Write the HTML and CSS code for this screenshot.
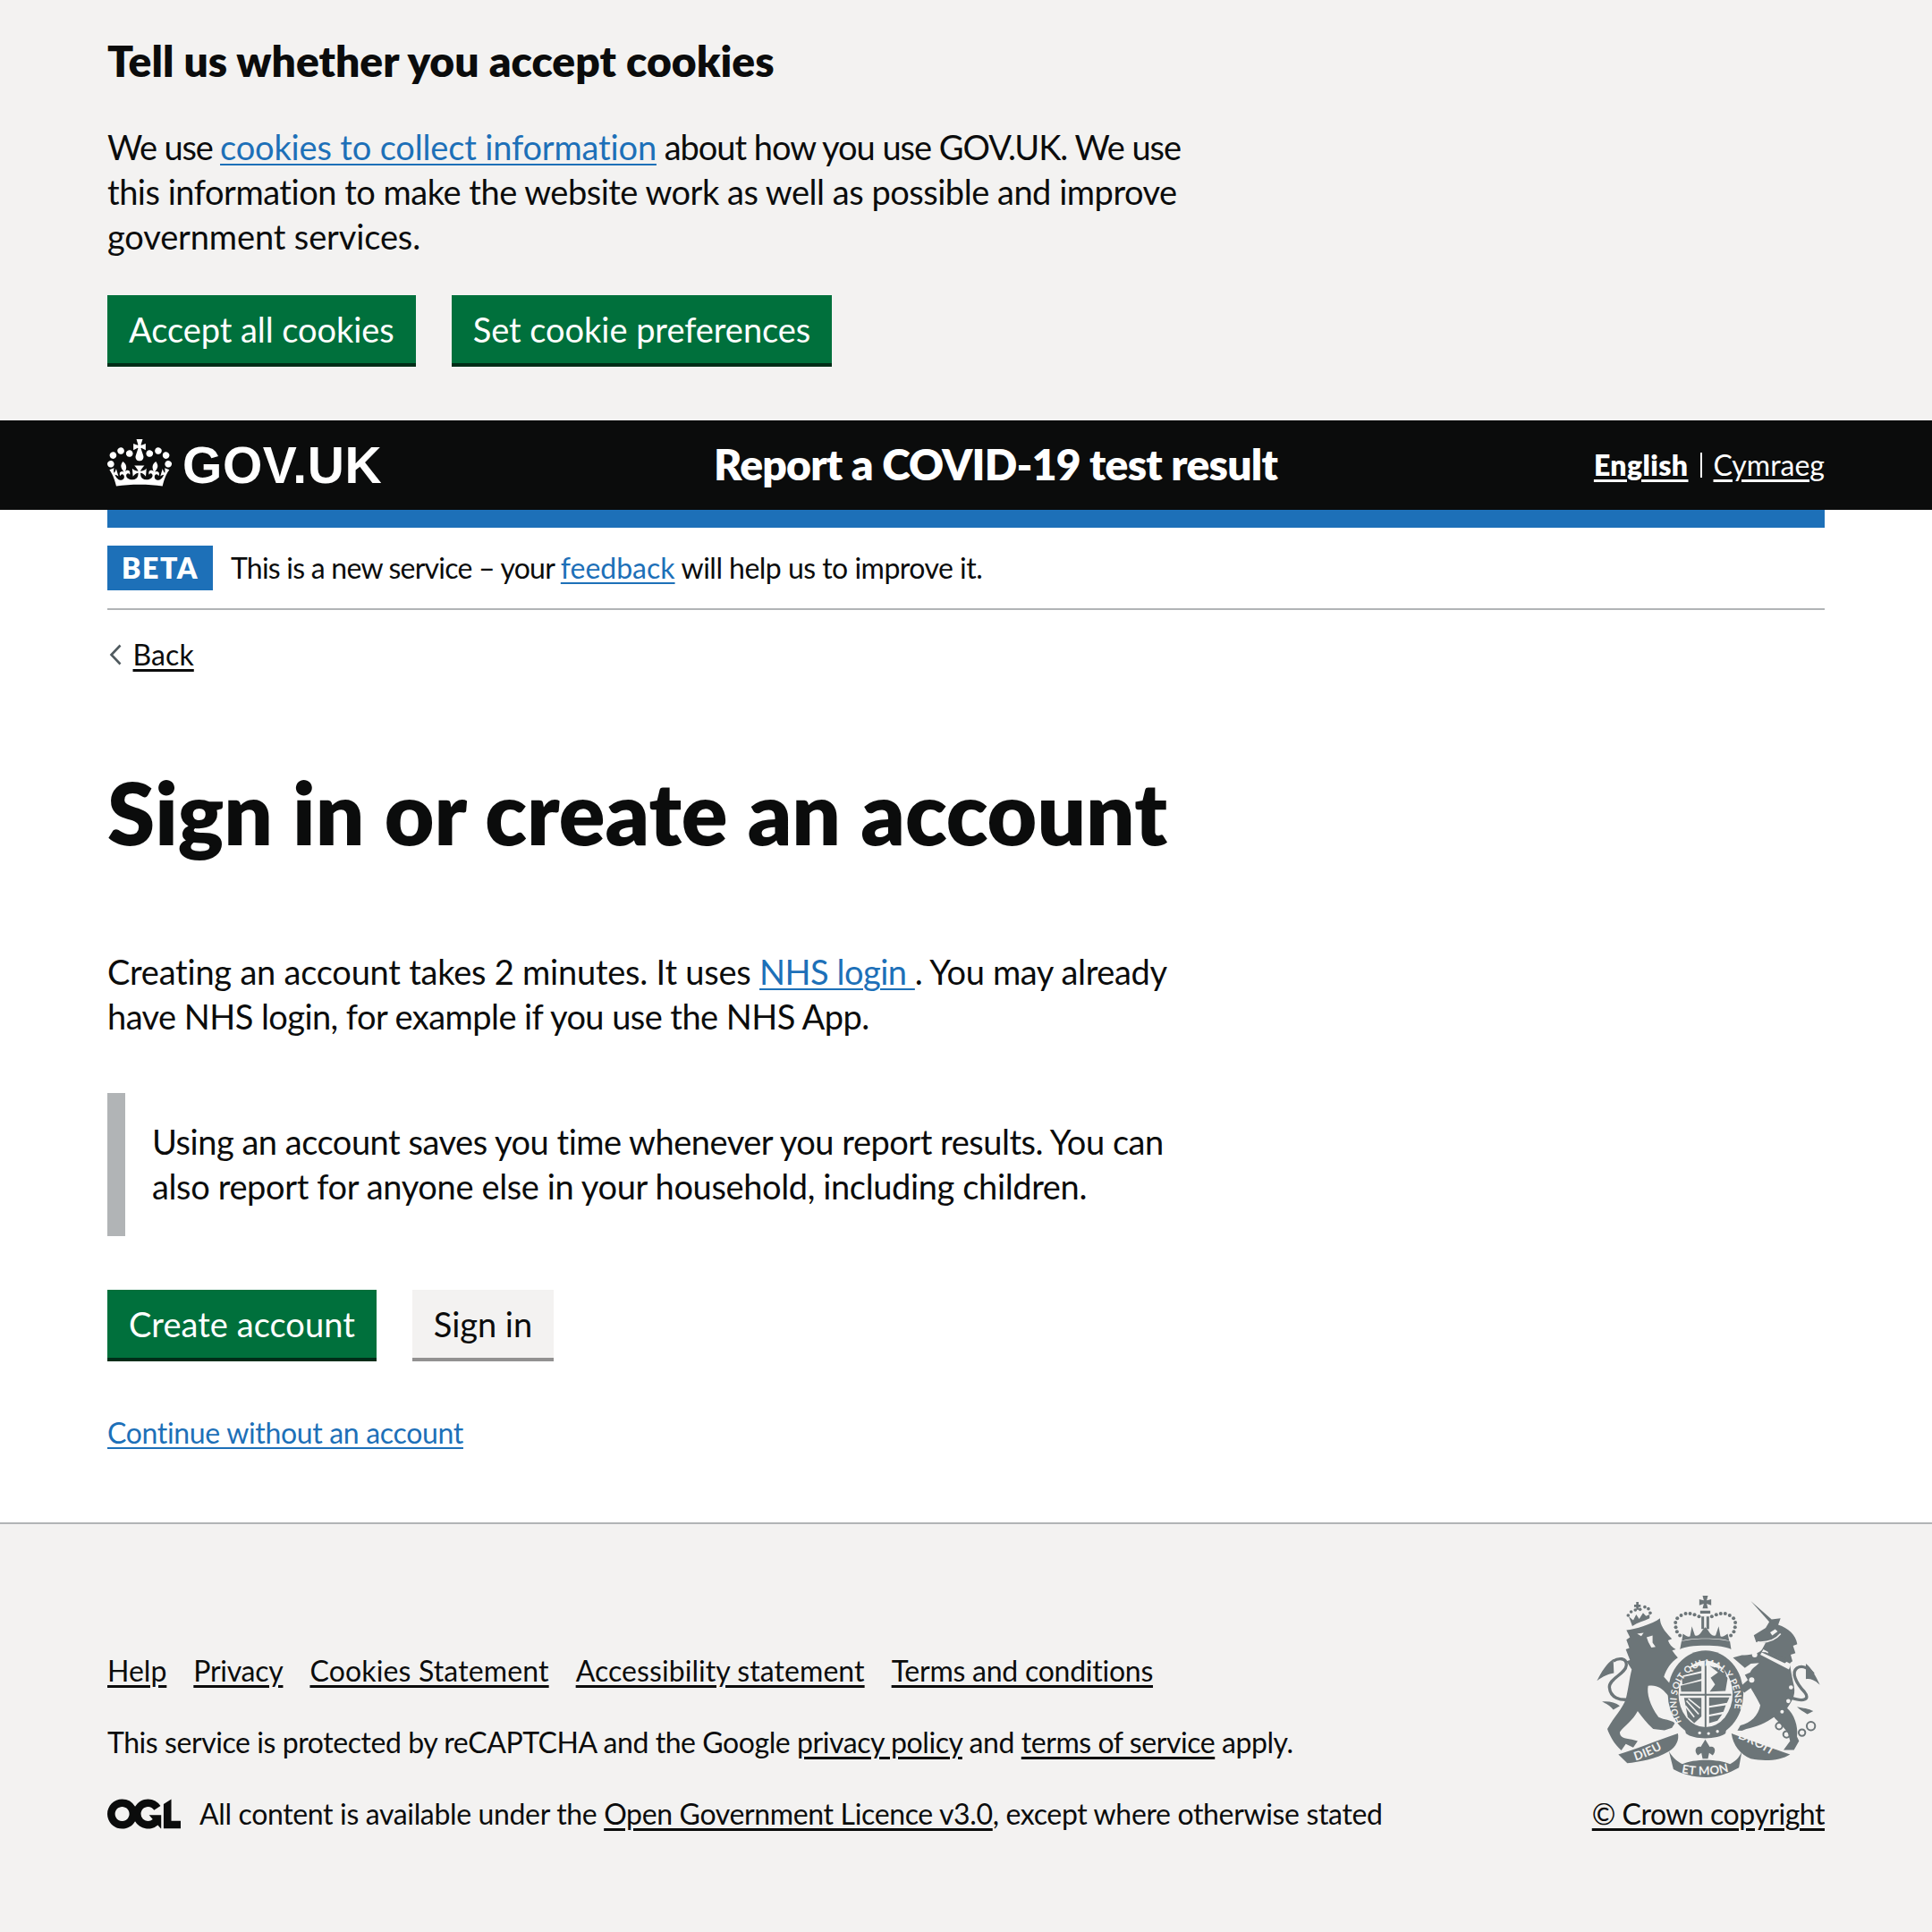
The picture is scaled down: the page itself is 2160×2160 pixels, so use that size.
FILE: index.html
```html
<!DOCTYPE html>
<html lang="en">
<head>
<meta charset="utf-8">
<title>Sign in or create an account</title>
<link rel="stylesheet" href="styles.css">
</head>
<body>
<section class="cookie">
  <h2 class="cookie-title">Tell us whether you accept cookies</h2>
  <p class="body-l cookie-text"><span class="fit-a">We use </span><a class="link fit-b" href="#">cookies to collect information</a><span class="fit-c"> about how you use GOV.UK. We use</span> this information to make the website work as well as possible and improve <span class="fit-h">government services.</span></p>
  <div class="btn-row">
    <a class="btn" href="#">Accept all cookies</a>
    <a class="btn" href="#">Set cookie preferences</a>
  </div>
</section>

<header class="header">
  <a class="logo" href="#">
    <svg class="crown" viewBox="0 0 132 97"><path fill="currentColor" fill-rule="evenodd" d="M25 30.2c3.5 1.5 7.7-.2 9.1-3.7 1.5-3.6-.2-7.8-3.9-9.2-3.6-1.4-7.6.3-9.1 3.9-1.4 3.5.3 7.5 3.9 9zM9 39.5c3.6 1.5 7.8-.2 9.2-3.7 1.5-3.6-.2-7.8-3.9-9.1-3.6-1.5-7.6.2-9.1 3.8-1.4 3.5.3 7.5 3.8 9zM4.4 57.2c3.5 1.5 7.7-.2 9.1-3.8 1.5-3.6-.2-7.7-3.9-9.1-3.5-1.5-7.6.3-9.1 3.8-1.4 3.5.3 7.6 3.9 9.1zm38.3-21.4c3.5 1.5 7.7-.2 9.1-3.8 1.5-3.6-.2-7.7-3.9-9.1-3.6-1.5-7.6.3-9.1 3.8-1.3 3.6.4 7.7 3.9 9.1zm64.4-5.6c-3.6 1.5-7.8-.2-9.1-3.7-1.5-3.6.2-7.8 3.8-9.2 3.6-1.4 7.7.3 9.2 3.9 1.3 3.5-.4 7.5-3.9 9zm15.9 9.3c-3.6 1.5-7.7-.2-9.1-3.7-1.5-3.6.2-7.8 3.7-9.1 3.6-1.5 7.7.2 9.2 3.8 1.5 3.5-.3 7.5-3.8 9zm4.7 17.7c-3.6 1.5-7.8-.2-9.2-3.8-1.5-3.6.2-7.7 3.9-9.1 3.6-1.5 7.7.3 9.2 3.8 1.3 3.5-.4 7.6-3.9 9.1zM89.3 35.8c-3.6 1.5-7.8-.2-9.2-3.8-1.4-3.6.2-7.7 3.9-9.1 3.6-1.5 7.7.3 9.2 3.8 1.4 3.6-.3 7.7-3.9 9.1zM69.7 17.7l8.9 4.7V9.3l-8.9 2.8c-.2-.3-.5-.6-.9-.9L72.4 0H59.6l3.5 11.2c-.3.3-.6.5-.9.9l-8.8-2.8v13.1l8.8-4.7c.3.3.6.7.9.9l-5 15.4v.1c-.2.8-.4 1.6-.4 2.4 0 4.1 3.1 7.5 7 8.1h.2c.3 0 .7.1 1 .1.4 0 .7 0 1-.1h.2c4-.6 7.1-4.1 7.1-8.1 0-.8-.1-1.7-.4-2.4V34l-5.1-15.4c.4-.2.7-.6 1-.9zM66 92.8c16.9 0 32.8 1.1 47.1 3.2 4-16.9 8.9-26.7 14-33.5l-9.6-3.4c1 4.9 1.1 7.2 0 10.2-1.5-1.4-3-4.3-4.2-8.7L108.6 76c2.8-2 5-3.2 7.5-3.3-4.4 9.4-10 11.9-13.6 11.2-4.3-.8-6.3-4.6-5.6-7.9 1-4.7 5.7-5.9 8-.5 4.3-8.7-3-11.4-7.6-8.8 7.1-7.2 7.9-13.5 2.1-21.1-8 6.1-8.1 12.3-4.5 20.8-4.7-5.4-12.1-2.5-9.5 6.2 3.4-5.2 7.9-2 7.2 3.1-.6 4.3-6.4 7.8-13.5 7.2-10.3-.9-10.9-8-11.2-13.8 2.5-.5 7.1 1.8 11 7.3L80.2 60c-4.1 4.4-8 5.3-12.3 5.4 1.4-4.4 8-11.6 8-11.6H55.5s6.4 7.2 7.9 11.6c-4.2-.1-8-1-12.3-5.4l1.4 16.4c3.9-5.5 8.5-7.7 10.9-7.3-.3 5.8-.9 12.8-11.1 13.8-7.2.6-12.9-2.9-13.5-7.2-.7-5 3.8-8.3 7.1-3.1 2.7-8.7-4.6-11.6-9.4-6.2 3.7-8.5 3.6-14.7-4.6-20.8-5.8 7.6-5 13.9 2.2 21.1-4.7-2.6-11.9.1-7.7 8.8 2.3-5.5 7.1-4.2 8.1.5.7 3.3-1.3 7.1-5.7 7.9-3.5.7-9-1.8-13.5-11.2 2.5.1 4.7 1.3 7.5 3.3l-4.7-15.4c-1.2 4.4-2.7 7.2-4.3 8.7-1.1-3-.9-5.3 0-10.2l-9.5 3.4c5 6.9 9.9 16.7 14 33.5 14.8-2.1 30.8-3.2 47.7-3.2z"/></svg>
    <span class="logotype">GOV.UK</span>
  </a>
  <a class="service" href="#">Report a COVID-19 test result</a>
  <nav class="lang">
    <a class="lang-link current" href="#">English</a>
    <span class="lang-sep"></span>
    <a class="lang-link" href="#">Cymraeg</a>
  </nav>
</header>

<div class="wrap">
  <div class="blue-bar"></div>
  <div class="phase">
    <strong class="tag">BETA</strong>
    <span class="phase-text"><span class="fit-i">This is a new service – your </span><a class="link fit-phase" href="#">feedback</a> will help us to improve it.</span>
  </div>
  <a class="back" href="#">
    <svg class="chevron" viewBox="0 0 14 24"><path d="M12.5 1.5 2.5 12l10 10.5" fill="none" stroke="currentColor" stroke-width="2.6"/></svg>
    <span>Back</span>
  </a>
  <main>
    <h1 class="title">Sign in or create an account</h1>
    <p class="body-l"><span class="fit-d">Creating an account takes 2 minutes. It uses </span><a class="link" href="#">NHS login </a><span class="fit-j">. You may already</span> <span class="fit-g">have NHS login, for example if you use the NHS App.</span></p>
    <div class="inset">Using an account saves you time whenever you report results. You can <span class="fit-f">also report for anyone else in your household, including children.</span></div>
    <div class="btn-row">
      <a class="btn fit-btn" href="#">Create account</a>
      <a class="btn btn-grey" href="#">Sign in</a>
    </div>
    <p class="continue"><a class="link" href="#">Continue without an account</a></p>
  </main>
</div>

<footer class="footer">
  <div class="footer-inner">
    <div class="meta">
      <ul class="footer-links">
        <li><a class="flink" href="#">Help</a></li>
        <li><a class="flink fit-e" href="#">Privacy</a></li>
        <li><a class="flink fit-k" href="#">Cookies Statement</a></li>
        <li><a class="flink fit-m" href="#">Accessibility statement</a></li>
        <li><a class="flink fit-l" href="#">Terms and conditions</a></li>
      </ul>
      <p class="captcha">This service is protected by reCAPTCHA and the Google <a class="flink" href="#">privacy policy</a> and <a class="flink" href="#">terms of service</a> apply.</p>
      <div class="licence">
        <svg class="ogl" viewBox="0 0 483.2 195.7"><path fill="currentColor" d="M421.5 142.8V.1l-50.7 32.3v161.1h112.4v-50.7zm-122.3-9.6A47.12 47.12 0 0 1 221 97.8c0-26 21.1-47.1 47.1-47.1 16.7 0 31.4 8.7 39.7 21.8l42.7-27.2A97.63 97.63 0 0 0 268.1 0c-36.5 0-68.3 20.1-85.1 49.7A98 98 0 0 0 97.8 0C43.9 0 0 43.9 0 97.8s43.9 97.8 97.8 97.8c36.5 0 68.3-20.1 85.1-49.7a97.76 97.76 0 0 0 149.6 25.4l19.4 22.2h3v-87.8h-80l24.3 27.5zM97.8 145c-26 0-47.1-21.1-47.1-47.1s21.1-47.1 47.1-47.1 47.2 21 47.2 47S123.8 145 97.8 145"/></svg>
        <span class="licence-text">All content is available under the <a class="flink" href="#">Open Government Licence v3.0</a>, except where otherwise stated</span>
      </div>
    </div>
    <div class="copyright">
      <svg class="arms" viewBox="70 42 755 613">
        <g class="ink">
          <path d="M172 158C200 155 260 138 285 118C285 140 298 160 325 187L312 192C316 205 325 215 338 222L326 226C332 235 338 243 345 250C322 265 305 290 298 315L340 362L345 392L325 396L310 375C290 350 270 340 245 345C240 370 250 410 280 450C300 460 320 458 335 470L325 486L300 494L262 490C240 470 225 450 210 430C195 460 165 480 150 500C150 520 165 520 190 525L210 530L195 552L170 540L155 562C130 540 115 510 108 490C130 450 160 420 170 390C180 350 182 320 190 290L172 262L184 258L170 222L182 218L172 190L184 182Z"/>
          <path class="stroke" d="M185 390C150 395 118 385 115 350C113 320 170 305 172 275C173 250 145 250 128 262"/>
          <path d="M128 255C105 270 90 295 73 328C95 312 112 305 130 302ZM90 398C110 395 135 400 150 412L128 425C115 410 105 405 90 398Z"/>
          <circle cx="178" cy="108" r="5.5"/><circle cx="188" cy="96" r="5.5"/><circle cx="202" cy="90" r="5.5"/><circle cx="218" cy="88" r="5.5"/><circle cx="234" cy="80" r="5.5"/><circle cx="246" cy="86" r="5.5"/><circle cx="252" cy="100" r="5.5"/>
          <path d="M198 72h7v-9h8v9h7v8h-7v9h-8v-9h-7z"/>
          <path d="M180 112L195 125L205 105L215 120L228 100L238 110L250 105L250 118C230 128 210 132 192 144Z"/>
          <path d="M428 42h18l-4 16 15-4v20l-15-5 4 16h-18l4-16-15 5V54l15 4z"/>
          <path d="M420 92h34v10h-34zM424 112h9v42h-9zM441 112h9v42h-9z"/>
          <circle cx="338" cy="148" r="6"/><circle cx="337" cy="132" r="6"/><circle cx="343" cy="118" r="6"/><circle cx="356" cy="108" r="6"/><circle cx="371" cy="102" r="6"/><circle cx="386" cy="102" r="6"/><circle cx="401" cy="106" r="6"/><circle cx="416" cy="112" r="6"/><circle cx="342" cy="163" r="6"/><circle cx="352" cy="176" r="6"/>
          <circle cx="537" cy="148" r="6"/><circle cx="538" cy="132" r="6"/><circle cx="532" cy="118" r="6"/><circle cx="519" cy="108" r="6"/><circle cx="504" cy="102" r="6"/><circle cx="489" cy="102" r="6"/><circle cx="474" cy="106" r="6"/><circle cx="459" cy="112" r="6"/><circle cx="533" cy="163" r="6"/><circle cx="523" cy="176" r="6"/>
          <path d="M358 195L362 170C372 178 380 182 386 178L392 145L402 175C412 180 420 172 428 158L437 148L446 158C454 172 462 180 472 175L482 145L488 178C494 182 502 178 512 170L518 195C500 182 375 182 358 195Z"/>
          <path d="M357 196C392 184 482 184 520 196L524 222C500 205 374 205 352 222Z"/>
          <ellipse cx="438" cy="372" rx="127" ry="146"/>
          <ellipse class="cut" cx="438" cy="372" rx="91" ry="112"/>
          <path d="M352 372h172v6H352zM435 262h6v222h-6z"/>
          <path d="M362 290L424 276V295L362 310ZM358 316L424 302V322L360 340ZM354 345L424 328V364H356Z"/>
          <path d="M452 278L500 290L512 320L505 362L452 364L470 340L455 318L480 300Z"/>
          <path d="M366 385H424V448L400 470L378 450Z"/>
          <path class="cutline" d="M374 395L415 440M380 388L420 420M370 412L400 450"/>
          <path d="M450 384L518 384L510 402L450 412ZM450 418L506 410L498 432L450 442ZM450 448L494 440L478 462L450 470Z"/>
          <path d="M368 488C400 518 480 518 508 488L505 505C480 525 400 528 372 505Z"/>
          <circle class="cut" cx="418" cy="503" r="5"/><circle class="cut" cx="448" cy="505" r="5"/><circle class="cut" cx="478" cy="498" r="5"/>
          <path d="M590 60L660 122L690 118L682 140C715 150 742 175 746 205L732 210L740 235L724 240L730 262L722 268C722 285 728 310 735 345C742 380 725 400 712 420C735 440 750 480 745 515L752 530L735 560L700 560L722 530L715 505C700 480 680 465 668 450C640 470 610 482 575 490L560 496L545 495L555 478C590 470 615 445 622 410C610 385 600 370 590 352L568 368L552 350L580 325L570 308L588 300C590 290 605 280 618 268L590 270L570 285L530 250L560 242C585 240 615 240 628 222L640 200L608 198L600 175L640 150L652 130Z"/>
          <path class="stroke" d="M725 385C770 400 790 390 770 365C742 335 725 300 745 285C765 272 790 290 800 305"/>
          <path d="M775 270C795 285 810 315 822 342C805 325 790 320 775 322ZM745 415C765 420 785 420 800 430L780 440C765 430 755 425 745 415Z"/>
          <path d="M145 575C200 560 270 530 345 505C350 525 340 550 315 565C270 592 215 600 175 605Z"/>
          <path d="M315 565C330 590 345 600 360 608C400 590 480 590 520 608C535 600 550 590 560 565L550 620C515 640 480 652 440 652C395 652 355 640 330 625Z"/>
          <path d="M525 505C580 525 660 555 722 575C690 595 640 600 590 590C555 575 530 545 525 505Z"/>
          <path d="M437 525L452 550C470 545 475 565 462 578L450 570L446 590H428L424 570L412 578C398 565 405 545 422 550Z"/>
        </g>
        <g class="cut">
          <path d="M240 182L260 176L260 200L270 214L256 216L246 198Z"/>
          <path d="M208 170L230 167L222 178Z"/>
          <path d="M655 165L672 155L680 162L662 176Z"/>
          <path d="M632 222L725 272L718 290L622 240Z"/>
          <circle cx="603" cy="240" r="9"/><circle cx="593" cy="325" r="9"/><circle cx="725" cy="350" r="7"/><circle cx="716" cy="396" r="7"/><circle cx="695" cy="432" r="6"/>
        </g>
        <path class="cutline" d="M612 198C640 200 670 195 690 170"/>
        <g class="ink"><path d="M640 232l8 4v-8l8 4v-7l8 4v9l8 4v-7l8 4v7l8 4v-7l8 4v7l8 4v-7l8 4v8l-8 6-80-38Z"/></g>
        <g class="rings">
          <circle cx="685" cy="480" r="11"/><circle cx="710" cy="508" r="11"/><circle cx="762" cy="502" r="11"/><circle cx="792" cy="480" r="14"/>
        </g>
        <defs>
          <path id="garter" d="M358 466A98 120 0 1 1 522 462"/>
          <path id="rib-left" d="M195 598C240 586 285 564 340 530"/>
          <path id="rib-mid" d="M345 634C400 649 480 649 535 626"/>
          <path id="rib-right" d="M545 522C590 535 635 562 690 598"/>
        </defs>
        <text class="motto garter-text"><textPath href="#garter">HONI SOIT QUI MAL Y PENSE</textPath></text>
        <text class="motto"><textPath href="#rib-left" startOffset="8">DIEU</textPath></text>
        <text class="motto"><textPath href="#rib-mid" startOffset="12">ET MON</textPath></text>
        <text class="motto"><textPath href="#rib-right">DROIT</textPath></text>
      </svg>
      <a class="flink copy-link" href="#">© Crown copyright</a>
    </div>
  </div>
</footer>
</body>
</html>
```
FILE: styles.css
```css
* { box-sizing: border-box; }
html, body { margin: 0; padding: 0; }
body {
  font-family: Lato, "Noto Sans", sans-serif;
  font-variant-ligatures: none;
  color: #0b0c0c;
  background: #fff;
  letter-spacing: -0.48px;
}
p, h1, h2, ul { margin: 0; padding: 0; }
.body-l { font-size: 38px; line-height: 50px; max-width: 1240px; }
.link { color: #1d70b8; text-decoration: underline; text-decoration-thickness: 2px; text-underline-offset: 4px; }
.flink { color: #0b0c0c; text-decoration: underline; text-decoration-thickness: 2.5px; text-underline-offset: 4px; }
.fit-a { letter-spacing: -1.2px; }
.fit-b { letter-spacing: -0.16px; }
.fit-c { letter-spacing: -1.02px; }
.fit-d { letter-spacing: -0.23px; }
.fit-e { letter-spacing: -0.28px; }
.fit-f { letter-spacing: -0.37px; }
.fit-g { letter-spacing: -0.56px; }
.fit-h { letter-spacing: -0.13px; }
.fit-i { letter-spacing: -0.77px; }
.fit-j { letter-spacing: -0.36px; }
.fit-k { letter-spacing: 0.15px; }
.fit-l { letter-spacing: -0.25px; }
.fit-m { letter-spacing: 0.07px; }
.fit-phase { letter-spacing: 0; }

.cookie { background: #f3f2f1; padding: 38px 120px 60px; }
.cookie-title { font-size: 48px; line-height: 60px; font-weight: 800; margin-bottom: 41px; letter-spacing: 0; }
.cookie-text { margin-bottom: 41px; }

.btn-row { display: flex; gap: 40px; }
.btn {
  display: block; height: 76px; padding: 0 24px;
  font-size: 38px; line-height: 76px; color: #fff; text-decoration: none; letter-spacing: -0.05px;
  background: #00703c; box-shadow: 0 4px 0 #002d18; margin-bottom: 4px;
}
.fit-btn { letter-spacing: 0.05px; }
.btn-grey { background: #f3f2f1; color: #0b0c0c; box-shadow: 0 4px 0 #929191; }

.header { background: #0b0c0c; color: #fff; height: 100px; padding: 0 120px; display: flex; align-items: center; }
.logo { display: flex; align-items: center; width: 678px; color: #fff; text-decoration: none; }
.crown { width: 72px; height: 53px; display: block; margin: 0 12px 5px 0; }
.logotype { font-family: "Liberation Sans", Arial, sans-serif; font-weight: 700; font-size: 57px; line-height: 60px; letter-spacing: 0.6px; }
.service { font-size: 48px; line-height: 60px; font-weight: 800; color: #fff; text-decoration: none; letter-spacing: -0.76px; margin-bottom: 2px; }
.lang { margin-left: auto; display: flex; align-items: center; font-size: 32px; line-height: 40px; letter-spacing: 0; }
.lang-link { color: #fff; text-decoration: underline; text-decoration-thickness: 2.5px; text-underline-offset: 4px; }
.current { font-weight: 800; letter-spacing: 0.4px; }
.lang-sep { width: 2px; height: 28px; background: #fff; margin: 0 13px; }

.wrap { padding: 0 120px; }
.blue-bar { height: 20px; background: #1d70b8; }
.phase { display: flex; align-items: center; gap: 20px; padding: 20px 0; border-bottom: 2px solid #b1b4b6; font-size: 32px; line-height: 40px; letter-spacing: -0.52px; }
.tag { display: block; width: 118px; height: 50px; line-height: 50px; text-align: center; background: #1d70b8; color: #fff; font-weight: 800; letter-spacing: 1.6px; }

.back { display: inline-flex; align-items: center; margin-top: 30px; font-size: 32px; line-height: 40px; color: #0b0c0c; text-decoration: none; letter-spacing: 0.1px; }
.back span { text-decoration: underline; text-decoration-thickness: 2.5px; text-underline-offset: 4px; }
.chevron { width: 14px; height: 24px; color: #505a5f; margin: 0 12.5px 0 2px; display: block; }

.title { font-size: 96px; line-height: 100px; font-weight: 800; margin-top: 106px; margin-bottom: 103px; letter-spacing: 0; }
.inset { width: 1240px; margin: 61px 0 60px; padding: 29px 30px 31px; border-left: 20px solid #b1b4b6; font-size: 38px; line-height: 50px; }
.continue { margin-top: 60px; font-size: 32px; line-height: 40px; letter-spacing: -0.33px; }

.footer { margin-top: 80px; background: #f3f2f1; border-top: 2px solid #b1b4b6; padding: 80px 120px 112px; }
.footer-inner { display: flex; align-items: flex-end; justify-content: space-between; font-size: 32px; line-height: 40px; }
.meta { display: flex; flex-direction: column; gap: 40px; }
.footer-links { display: flex; gap: 30px; list-style: none; letter-spacing: 0; }
.captcha { letter-spacing: -0.43px; }
.licence { display: flex; align-items: center; gap: 21px; }
.licence-text { letter-spacing: -0.35px; }
.ogl { width: 82px; height: 34px; display: block; }
.copyright { display: flex; flex-direction: column; align-items: center; }
.arms { width: 252px; height: 204px; display: block; margin-bottom: 20px; }
.ink { fill: #6c7578; }
.ink .stroke { fill: none; stroke: #6c7578; stroke-width: 10; }
.cut { fill: #f3f2f1; }
.cutline { fill: none; stroke: #f3f2f1; stroke-width: 5; }
.rings { fill: none; stroke: #6c7578; stroke-width: 6; }
.motto { font-family: Lato, sans-serif; font-weight: 700; font-size: 40px; letter-spacing: 1px; fill: #f3f2f1; }
.garter-text { font-size: 31px; letter-spacing: 0.5px; }
```
